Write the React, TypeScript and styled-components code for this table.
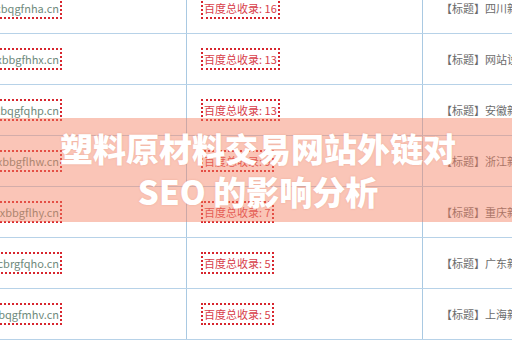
import styled, { createGlobalStyle } from "styled-components";

const GlobalStyle = createGlobalStyle`
  html, body {
    margin: 0;
    padding: 0;
    background: #ffffff;
    overflow: hidden;
  }
  body {
    font-family: "Noto Sans CJK SC", "Noto Sans", "Liberation Sans", sans-serif;
  }
`;

const Page = styled.div`
  position: relative;
  width: 512px;
  height: 340px;
  overflow: hidden;
  background: #fff;
`;

// the table is a scrolled crop: it starts above and left of the view
const Table = styled.div`
  margin-top: -17px;
  margin-left: -40px;
  display: flex;
  flex-direction: column;
`;

const Row = styled.div`
  display: grid;
  grid-template-columns: 227px 236px 1fr;
  height: 51px;
  box-sizing: border-box;
  border-bottom: 1px solid #b7d2e8;
`;

const Cell = styled.div`
  display: flex;
  align-items: center;
  border-right: 1px solid #a9c9e2;
  overflow: hidden;
  white-space: nowrap;
  font-size: 11px;
  &:last-child {
    border-right: none;
  }
`;

const DomainCell = styled(Cell)`
  justify-content: flex-end;
  padding-right: 124px;
`;

const CountCell = styled(Cell)`
  padding-left: 14px;
`;

const TitleCell = styled(Cell)`
  padding-left: 18px;
`;

const Dotted = styled.span<{ $color: string }>`
  display: inline-block;
  padding: 1px 1px;
  line-height: 16px;
  border: 2px dotted #d7262e;
  color: ${(p) => p.$color};
`;

const Title = styled.span`
  color: #6b6b6b;
`;

const Banner = styled.div`
  position: absolute;
  left: 0;
  right: 0;
  top: 118px;
  height: 104px;
  box-sizing: border-box;
  padding: 0 30px 0 34px;
  display: flex;
  align-items: center;
  justify-content: center;
  background: rgba(244, 128, 98, 0.46);
`;

const Heading = styled.h1`
  margin: 0;
  color: #ffffff;
  font-family: "Noto Sans CJK SC", "Noto Sans", sans-serif;
  font-weight: 900;
  font-size: 33px;
  line-height: 43px;
  text-align: center;
  text-shadow: 0 0 2px rgba(200, 90, 60, 0.25);
`;

const rows = [
  { domain: "www.cbqgfnha.cn", count: 16, title: "四川新闻网" },
  { domain: "www.xbbgfhhx.cn", count: 13, title: "网站设计" },
  { domain: "www.cbqgfqhp.cn", count: 13, title: "安徽新闻网" },
  { domain: "www.xbbgflhw.cn", count: 9, title: "浙江新闻网" },
  { domain: "www.xbbgflhy.cn", count: 7, title: "重庆新闻网" },
  { domain: "www.cbrgfqho.cn", count: 5, title: "广东新闻网" },
  { domain: "www.cbqgfmhv.cn", count: 5, title: "上海新闻网" },
];

export default function App() {
  return (
    <Page>
      <GlobalStyle />
      <Table>
        {rows.map((r) => (
          <Row key={r.domain}>
            <DomainCell>
              <Dotted $color="#6f8a7c">{r.domain}</Dotted>
            </DomainCell>
            <CountCell>
              <Dotted $color="#d8404a">百度总收录: {r.count}</Dotted>
            </CountCell>
            <TitleCell>
              <Title>【标题】{r.title}</Title>
            </TitleCell>
          </Row>
        ))}
      </Table>
      <Banner>
        <Heading>塑料原材料交易网站外链对 SEO 的影响分析</Heading>
      </Banner>
    </Page>
  );
}
